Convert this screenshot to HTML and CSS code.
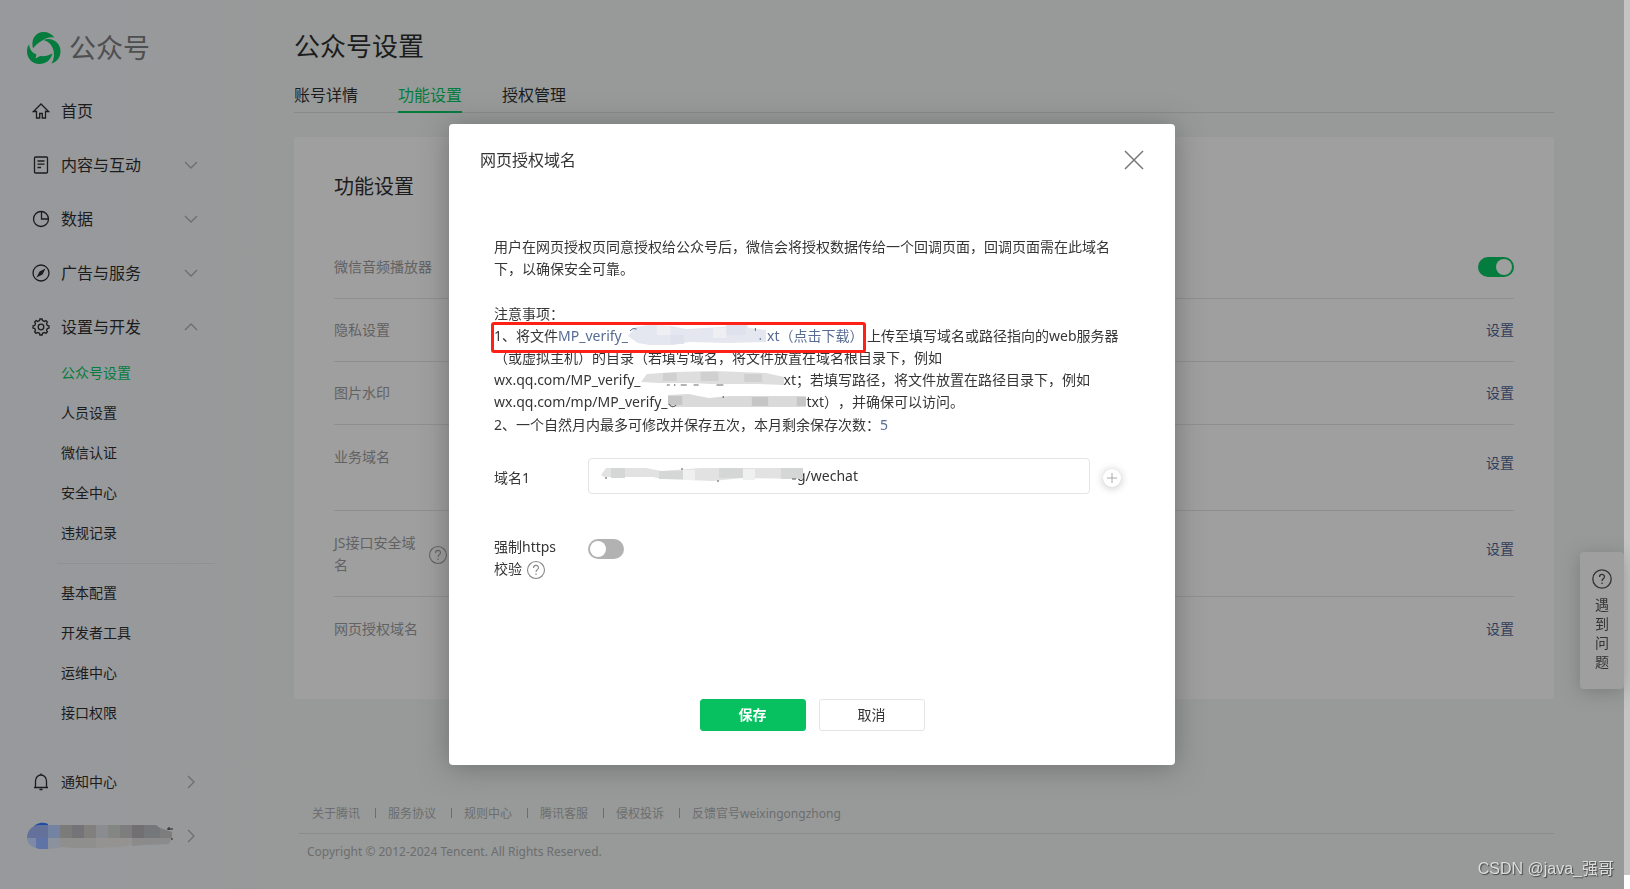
FILE: index.html
```html
<!DOCTYPE html>
<html lang="zh-CN">
<head>
<meta charset="utf-8">
<title>公众号设置</title>
<link rel="stylesheet" href="styles.css">
</head>
<body>
<div class="shell">
  <aside class="sidebar">
    <a class="brand" href="#">
      <svg class="brand-mark" viewBox="0 0 34 34" aria-hidden="true">
        <path d="M6 17.500C3.500 8 9 1 16.500 1 21 1 25 3 27.500 6.500 22.500 5.500 18 7.500 14.500 10 10.500 12.500 8 14.500 6 17.500z"/>
        <path d="M16.500 9C25 5.500 33.500 12 33.500 20c0 6-3 10.500-9 12.500 2.500-4 3-8.500 2-13C25 14 22 10.500 16.500 9z"/>
        <path d="M2 13.500C3 19 5.500 22 9.500 23.500L8.500 27.500l4.500-2.500c5 .5 8.500-.5 12.500-2.500-2 7-7 10.500-13 10.500C5 33 0 27 0 20.500c0-2.500.5-5 2-7z"/>
      </svg>
      <span>公众号</span>
    </a>
    <nav class="menu">
      <a class="menu-item" href="#">
        <svg class="icon" viewBox="0 0 18 18"><path d="M9 2 1.5 9.5h3V16h3.200v-4.500h2.600V16h3.200V9.500h3z"/></svg>
        <span>首页</span>
      </a>
      <a class="menu-item" href="#">
        <svg class="icon" viewBox="0 0 18 18"><rect x="2.500" y="1" width="13" height="16" rx="1"/><path d="M5.500 5h7M5.500 8.200h7M5.500 11.500h3.500"/></svg>
        <span>内容与互动</span>
        <svg class="chevron" viewBox="0 0 14 8"><path d="m1 1 6 6 6-6"/></svg>
      </a>
      <a class="menu-item" href="#">
        <svg class="icon" viewBox="0 0 18 18"><circle cx="9" cy="9" r="7.500"/><path d="M9.500 1.500v7.500h7"/></svg>
        <span>数据</span>
        <svg class="chevron" viewBox="0 0 14 8"><path d="m1 1 6 6 6-6"/></svg>
      </a>
      <a class="menu-item" href="#">
        <svg class="icon" viewBox="0 0 18 18"><circle cx="9" cy="9" r="8"/><path class="solid" d="m13.500 4.500-3 6-3-3zM4.500 13.500l3-6 3 3z"/></svg>
        <span>广告与服务</span>
        <svg class="chevron" viewBox="0 0 14 8"><path d="m1 1 6 6 6-6"/></svg>
      </a>
      <a class="menu-item" href="#">
        <svg class="icon" viewBox="0 0 18 18"><path d="m7.500 2.600.4-1.600h2.200l.4 1.600 1.900.8 1.500-.9 1.500 1.600-.9 1.400.8 1.900 1.700.5v2.200l-1.700.4-.8 1.900.9 1.500-1.500 1.500-1.500-.9-1.900.8-.4 1.700H7.900l-.4-1.700-1.900-.8-1.500.9-1.500-1.500.9-1.500-.8-1.900L1 10.100V7.900l1.700-.5.8-1.900-.9-1.400 1.500-1.600 1.500.9z"/><circle cx="9" cy="9" r="2.800"/></svg>
        <span>设置与开发</span>
        <svg class="chevron" viewBox="0 0 14 8"><path d="m1 7 6-6 6 6"/></svg>
      </a>
    </nav>
    <nav class="submenu">
      <a class="current" href="#">公众号设置</a>
      <a href="#">人员设置</a>
      <a href="#">微信认证</a>
      <a href="#">安全中心</a>
      <a href="#">违规记录</a>
      <hr>
      <a href="#">基本配置</a>
      <a href="#">开发者工具</a>
      <a href="#">运维中心</a>
      <a href="#">接口权限</a>
    </nav>
    <div class="account">
      <a class="menu-item small" href="#">
        <svg class="icon" viewBox="0 0 18 18"><path d="M3.500 14.500V8c0-3.500 2.500-6 5.500-6s5.500 2.500 5.500 6v6.500M2 14.500h14M9 .500V2M7.500 16.500h3"/></svg>
        <span>通知中心</span>
        <svg class="chevron" viewBox="0 0 14 14"><path d="m4 1 6 6-6 6"/></svg>
      </a>
      <a class="menu-item small profile" href="#" aria-label="账号">
        <svg class="profile-mosaic" viewBox="0 0 147 28" aria-hidden="true">
          <path fill="#1f4da6" d="M4 8C8 1 15-1 21 2v6z"/>
          <path fill="#64729b" d="M0 16C0 8 6 3 12 3h10v13z"/>
          <path fill="#7e8aa5" d="M0 16h9v10C4 25 0 21 0 16z"/>
          <path fill="#5f74a6" d="M9 16h12v11h-9l-3-1z"/>
          <path fill="#7583a2" d="M21 3h12v13H21z"/>
          <path fill="#8b929d" d="M21 16h12v10l-12 1z"/>
          <path fill="#7b7b79" d="M33 3h12v13H33z"/>
          <path fill="#747377" d="M45 3h12v13H45z"/>
          <path fill="#82807e" d="M57 3h12v13H57z"/>
          <path fill="#898d90" d="M69 3h12v13H69z"/>
          <path fill="#848684" d="M81 3h12v13H81z"/>
          <path fill="#7e7d7e" d="M93 3h12v13H93z"/>
          <path fill="#716f71" d="M105 3h12v13h-12z"/>
          <path fill="#74787b" d="M117 3h12l4 3v10h-16z"/>
          <path fill="#7c7d7c" d="m133 6 12 4v6h-12z"/>
          <path fill="#8f8f8d" d="M33 16h36v10H49l-16-1z"/>
          <path fill="#949392" d="M69 16h36v7l-14 2-22 1z"/>
          <path fill="#8b8b8b" d="M105 16h40l-3 6-24 1-13 1z"/>
          <path fill="none" stroke="#222" d="M140 7h6M142 5v3M145 16v2"/>
        </svg>
        <svg class="chevron" viewBox="0 0 14 14"><path d="m4 1 6 6-6 6"/></svg>
      </a>
    </div>
  </aside>

  <main class="main">
    <h1>公众号设置</h1>
    <nav class="tabs">
      <a href="#">账号详情</a>
      <a class="current" href="#">功能设置</a>
      <a href="#">授权管理</a>
    </nav>
    <section class="card">
      <h2>功能设置</h2>
      <div class="setting first">
        <label class="setting-name" for="audio">微信音频播放器</label>
        <input class="switch" id="audio" type="checkbox" checked>
      </div>
      <div class="setting"><span class="setting-name">隐私设置</span><a href="#">设置</a></div>
      <div class="setting"><span class="setting-name">图片水印</span><a href="#">设置</a></div>
      <div class="setting tall"><span class="setting-name">业务域名</span><a href="#">设置</a></div>
      <div class="setting tall with-help">
        <span class="setting-name">JS接口安全域名</span>
        <svg class="help" viewBox="0 0 20 20"><circle cx="10" cy="10" r="8.500"/><path d="M7.500 8c0-3.500 5-3.300 5-.3 0 2-2.500 2-2.500 4.300M10 13.500V15"/></svg>
        <a href="#">设置</a>
      </div>
      <div class="setting last"><span class="setting-name">网页授权域名</span><a href="#">设置</a></div>
    </section>
    <footer class="footer">
      <div class="footer-links">
        <a href="#">关于腾讯</a><a href="#">服务协议</a><a href="#">规则中心</a><a href="#">腾讯客服</a><a href="#">侵权投诉</a><a href="#">反馈官号weixingongzhong</a>
      </div>
      <p>Copyright © 2012-2024 Tencent. All Rights Reserved.</p>
    </footer>
  </main>
  <div class="rail"></div>
</div>

<button class="float-help" type="button">
  <svg viewBox="0 0 20 20" aria-hidden="true"><circle cx="10" cy="10" r="9.200"/><path d="M7.500 8c0-3.500 5-3.300 5-.3 0 2-2.500 2-2.500 4.300M10 13.500V15"/></svg>
  <span>遇</span><span>到</span><span>问</span><span>题</span>
</button>

<div class="overlay">
  <form class="dialog" role="dialog" aria-labelledby="dialog-title">
    <header class="dialog-head">
      <h3 id="dialog-title">网页授权域名</h3>
      <button class="close" type="button" aria-label="关闭"><svg viewBox="0 0 20 20"><path d="m1 1 18 18M19 1 1 19"/></svg></button>
    </header>
    <div class="dialog-body">
      <p class="intro">用户在网页授权页同意授权给公众号后，微信会将授权数据传给一个回调页面，回调页面需在此域名下，以确保安全可靠。</p>
      <div class="notes">
        <p>注意事项：</p>
        <p class="marked">1、将文件<a href="#">MP_verify_<svg class="mosaic m1" viewBox="0 0 144 20" preserveAspectRatio="none" aria-hidden="true"><path fill="#e5e7f0" d="M0 11 8 2l14-2 23 1 15 3 38-2 15-3h10l2 4 18 2v12l-40 1-40-1-15 3-20 1-18-3z"/><path fill="#eeeff3" d="M30 1h14v9H30zM88 3h14v10H88z"/><path fill="#dfe2ec" d="M44 10h14v9H44zM102 0h20v10h-20z"/><path fill="none" stroke="#576b95" d="M2 6q3-4 7-2M132 3v3M137 13v2"/></svg>xt（点击下载）</a> 上传至填写域名或路径指向的web服务器</p>
        <p>（或虚拟主机）的目录（若填写域名，将文件放置在域名根目录下，例如</p>
        <p>wx.qq.com/MP_verify_<svg class="mosaic m2" viewBox="0 0 144 18" preserveAspectRatio="none" aria-hidden="true"><path fill="#dedede" d="M0 11 6 3l28-2 40-1 52 2 18 4v8l-26-1H70l-20-1H18z"/><path fill="#d0d0d0" d="M22 2h14v8H22zM60 1h18v9H60zM104 3h18v8h-18z"/><path stroke="#666" d="M26 14h3M34 13v2M40 14h6M53 14h5M76 14h7"/></svg>xt；若填写路径，将文件放置在路径目录下，例如</p>
        <p>wx.qq.com/mp/MP_verify_<svg class="mosaic m3" viewBox="0 0 136 18" preserveAspectRatio="none" aria-hidden="true"><path fill="#dadada" d="m0 2 20-1 20 4 20-2h75v11H2z"/><path fill="#c6c6c6" d="M0 3h14v9H0zM82 4h16v9H82zM126 4h9v9h-9z"/><path fill="none" stroke="#555" d="M1 11q3 5 7 1M54 3v2"/></svg>txt），并确保可以访问。</p>
        <p>2、一个自然月内最多可修改并保存五次，本月剩余保存次数：<span class="count">5</span></p>
      </div>
      <div class="field">
        <label for="domain">域名1</label>
        <div class="input-wrap">
          <input id="domain" type="text" value="g/wechat">
          <svg class="input-mosaic" viewBox="0 0 202 16" aria-hidden="true"><path fill="#e2e2e2" d="m0 8 5-7h40l15 3 40-3h102v11l-60-1-30 3-52-2-8-2H3z"/><path fill="#d5d7d6" d="M10 1h14v10H10zM58 4h24v8H58zM118 1h24v10h-24zM180 1h22v11h-22z"/><path fill="#f0f0f0" d="M82 3h12v10H82zM142 2h12v11h-12z"/><path stroke="#555" d="M5 10v2M81 1v2M117 13v2M191 12h4"/></svg>
        </div>
        <button class="add" type="button" aria-label="添加"><svg viewBox="0 0 10 10"><path d="M5 0v10M0 5h10"/></svg></button>
      </div>
      <div class="field force">
        <label for="https">强制https<br>校验 <svg class="help" viewBox="0 0 20 20"><circle cx="10" cy="10" r="8.500"/><path d="M7.500 8c0-3.500 5-3.300 5-.3 0 2-2.500 2-2.500 4.300M10 13.500V15"/></svg></label>
        <input class="switch light" id="https" type="checkbox">
      </div>
    </div>
    <div class="actions">
      <button class="btn primary" type="submit">保存</button>
      <button class="btn" type="button">取消</button>
    </div>
  </form>
</div>
<div class="watermark">CSDN @java_强哥</div>
</body>
</html>
```
FILE: styles.css
```css
*, ::before, ::after { box-sizing: border-box; }
body {
  margin: 0;
  font: 14px/22px "Noto Sans", "Noto Sans CJK SC", sans-serif;
  color: #1c1c1d;
  background: #989a99;
}
a { color: inherit; text-decoration: none; }
h1, h2, h3, p { margin: 0; font-weight: 400; }
button, input { font: inherit; color: inherit; }
svg { display: block; fill: none; stroke: currentColor; }

.shell {
  display: flex;
  min-height: 100vh;
  background: linear-gradient(90deg, #98999c 0, #98999b 180px, #979a99 270px, #989a99 100%);
}
.rail { width: 6px; background: linear-gradient(#c4c4c4, #c4c4c4) 0 0 / 100% calc(100% - 14px) no-repeat #fff; }

/* Sidebar */
.sidebar { width: 224px; flex: none; padding-top: 24px; }
.brand { display: flex; align-items: center; gap: 8px; height: 48px; padding-left: 27px; font-size: 27px; color: #4e4f50; }
.brand-mark { width: 34px; height: 34px; fill: #047c3e; stroke: none; }
.menu { padding-top: 12px; }
.menu-item { display: flex; align-items: center; height: 54px; padding: 0 26px 0 32px; font-size: 16px; }
.menu-item span { margin-left: 11px; }
.icon { width: 18px; height: 18px; stroke-width: 1.3; }
.icon .solid { fill: currentColor; stroke: none; }
.chevron { width: 14px; height: 14px; margin-left: auto; stroke: #6d6e70; stroke-width: 1.3; }
.submenu { margin-top: -1px; padding-left: 57px; }
.submenu a { display: block; padding-left: 4px; line-height: 40px; }
.submenu .current { color: #047c3e; }
.submenu hr { width: 158px; height: 1px; margin: 10px 0 9px; border: 0; background: #8e9092; }
.account { padding-top: 22px; }
.menu-item.small { font-size: 14px; }
.menu-item.profile { padding-left: 27px; }
.profile-mosaic { width: 147px; height: 28px; stroke: none; }

/* Page content */
.main { flex: 1; min-width: 0; padding: 24px 70px 0; }
h1 { font-size: 26px; line-height: 44px; }
.tabs { display: flex; gap: 40px; height: 45px; border-bottom: 1px solid #898b8b; font-size: 16px; }
.tabs a { height: 45px; padding-top: 16px; }
.tabs .current { color: #047c3e; border-bottom: 2px solid #047c3e; }
.card { margin-top: 24px; padding: 36px 40px 39px; border-radius: 3px; background: #9f9f9f; }
h2 { font-size: 20px; line-height: 28px; margin-bottom: 35px; }
.setting { display: flex; align-items: center; min-height: 63px; border-bottom: 1px solid #8d8f90; color: #626262; }
.setting-name { width: 98px; }
.setting > :last-child { margin-left: auto; }
.setting a { color: #303e5c; }
.setting.tall { min-height: 86px; padding-bottom: 10px; }
.setting.tall .setting-name { padding-bottom: 12px; }
.setting.with-help .setting-name { padding: 10px 8px 0 0; }
.setting.with-help .help { margin: 12px 0 0 -4px; }
.setting.last { border: 0; }
.help { width: 20px; height: 20px; stroke-width: 1.1; }
.footer { padding: 104px 0 10px 5px; font-size: 12px; color: #6c6d6e; }
.footer-links { display: flex; padding: 0 14px 8px 13px; border-bottom: 1px solid #8a8c8b; }
.footer-links a + a::before { content: ""; display: inline-block; width: 1px; height: 10px; margin: 0 12px 0 15px; background: #6c6d6e; }
.footer p { padding: 7px 8px; }

.switch { appearance: none; display: flex; width: 36px; height: 20px; margin: 0; padding: 2px; border-radius: 10px; background: #047c3e; justify-content: flex-end; }
.switch::before { content: ""; width: 16px; height: 16px; border-radius: 8px; background: #9f9f9f; }
.switch.light { background: #b2b2b2; justify-content: flex-start; }
.switch.light::before { background: #fff; }

.float-help {
  position: fixed; right: 6px; top: 552px;
  display: flex; flex-direction: column; align-items: center;
  width: 44px; padding: 17px 0 18px; border: 0; border-radius: 4px;
  background: #9f9f9f; line-height: 19px; color: #333;
  box-shadow: 0 3px 18px rgba(70, 72, 74, .35);
}
.float-help svg { width: 20px; height: 20px; margin-bottom: 6px; stroke-width: 1.3; }

/* Dialog */
.overlay { position: fixed; inset: 0 6px 0 0; display: flex; align-items: center; justify-content: center; }
.dialog { width: 726px; border-radius: 4px; background: #fff; color: #353535; box-shadow: 0 2px 28px rgba(70, 72, 70, .5); }
.dialog-head { display: flex; justify-content: space-between; align-items: center; height: 72px; padding: 0 30px 0 31px; }
h3 { font-size: 16px; }
.close { padding: 0; border: 0; background: none; color: #777; }
.close svg { width: 22px; height: 20px; stroke-width: 1.5; }
.dialog-body { padding: 40px 45px 0; }
.intro { margin-bottom: 23px; }
.notes { text-spacing-trim: space-all; }
.notes p { white-space: nowrap; }
.notes p:last-child { margin-top: 1px; }
.notes a, .count { color: #576b95; }
.marked { position: relative; }
.marked::after { content: ""; position: absolute; left: -3px; top: -3px; width: 375px; height: 31px; border: 3px solid #ff2116; border-radius: 3px; }
.mosaic { display: inline-block; height: 18px; vertical-align: -4px; stroke: none; }
.m1 { width: 139px; height: 20px; }
.m2 { width: 143px; }
.m3 { width: 139px; }
.field { display: flex; align-items: center; margin-top: 22px; }
.field label { width: 94px; flex: none; padding-top: 4px; }
.input-wrap { position: relative; width: 502px; }
.input-wrap input { display: block; width: 100%; height: 36px; padding: 0 10px 2px 208px; border: 1px solid #e4e4e4; border-radius: 4px; background: #fff; outline: 0; }
.input-mosaic { position: absolute; left: 13px; top: 9px; width: 202px; height: 16px; stroke: none; }
.add { display: grid; place-items: center; width: 18px; height: 18px; margin: 4px 0 0 13px; padding: 0; border: 0; border-radius: 9px; background: #fff; color: #aaa; box-shadow: 0 1px 8px rgba(0, 0, 0, .25); }
.add svg { width: 10px; height: 10px; }
.field.force { align-items: flex-start; margin-top: 42px; }
.field.force label { padding-top: 0; }
.force .switch { margin-top: 3px; }
.force .help { display: inline-block; vertical-align: -6px; color: #888; }
.actions { display: flex; justify-content: center; gap: 13px; padding: 119px 0 34px; }
.btn { width: 106px; height: 32px; padding: 0; border: 1px solid #e4e4e8; border-radius: 3px; background: #fff; }
.btn.primary { border-color: #07c160; background: #07c160; color: #fff; font-weight: 700; }

.watermark { position: fixed; right: 16px; bottom: 9px; font: 16px/22px "Liberation Sans", "Noto Sans CJK SC", sans-serif; color: #dcdcdc; text-shadow: 1px 1px 1px #444; }
```
